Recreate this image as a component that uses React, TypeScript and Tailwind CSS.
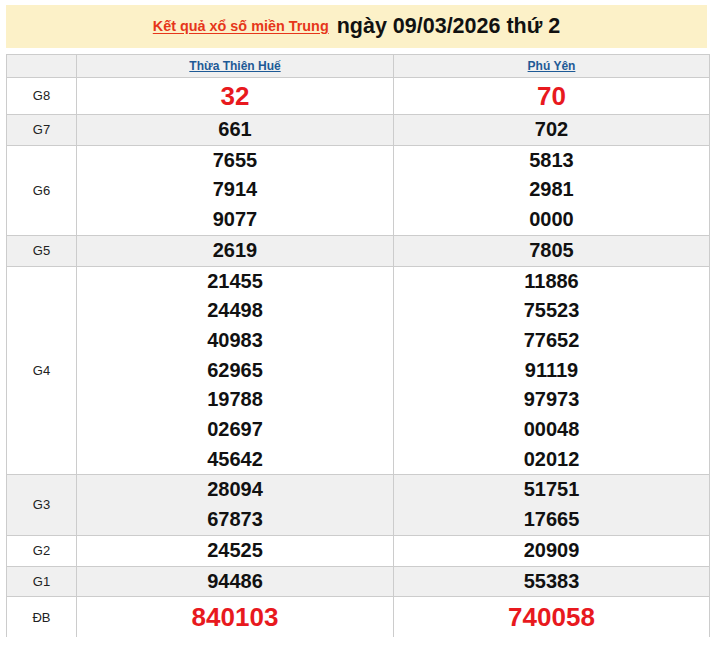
const rows: { label: string; hue: boolean; big?: boolean; h?: string; a: string[]; b: string[] }[] = [
  { label: "G8", hue: false, big: true, h: "h-[37px]", a: ["32"], b: ["70"] },
  { label: "G7", hue: true, a: ["661"], b: ["702"] },
  { label: "G6", hue: false, a: ["7655", "7914", "9077"], b: ["5813", "2981", "0000"] },
  { label: "G5", hue: true, a: ["2619"], b: ["7805"] },
  {
    label: "G4",
    hue: false,
    a: ["21455", "24498", "40983", "62965", "19788", "02697", "45642"],
    b: ["11886", "75523", "77652", "91119", "97973", "00048", "02012"],
  },
  { label: "G3", hue: true, a: ["28094", "67873"], b: ["51751", "17665"] },
  { label: "G2", hue: false, a: ["24525"], b: ["20909"] },
  { label: "G1", hue: true, a: ["94486"], b: ["55383"] },
  { label: "ĐB", hue: false, big: true, h: "h-[40px]", a: ["840103"], b: ["740058"] },
];

function Numbers({ values, big }: { values: string[]; big?: boolean }) {
  return (
    <div className="flex flex-col items-center justify-center">
      {values.map((v, i) =>
        big ? (
          <span key={i} className="text-[26px] font-bold leading-[30px] text-[#e8191e]">
            {v}
          </span>
        ) : (
          <span key={i} className="text-[20px] font-bold leading-[29.7px] text-[#111]">
            {v}
          </span>
        )
      )}
    </div>
  );
}

export default function App() {
  return (
    <div className="h-[645px] w-[712px] bg-white pl-[6px] pt-[5px] font-['Liberation_Sans',Arial,sans-serif]">
      <div className="flex h-[43px] w-[701px] items-center justify-center gap-[8px] bg-[#fcf1c8]">
        <a className="text-[14.4px] font-bold text-[#e6361a] underline underline-offset-2" href="#">
          Kết quả xổ số miền Trung
        </a>
        <span className="text-[21.5px] font-bold text-[#111]">ngày 09/03/2026 thứ 2</span>
      </div>
      <div className="mt-[6px] w-[704px] border-x border-t border-[#cccccc]">
        <div className="grid h-[23px] grid-cols-[70px_317px_1fr] border-b border-[#cccccc] bg-[#f0f0f0]">
          <div className="border-r border-[#cccccc]" />
          <div className="flex items-center justify-center border-r border-[#cccccc]">
            <a className="text-[12px] font-bold text-[#1e5a96] underline" href="#">
              Thừa Thiên Huế
            </a>
          </div>
          <div className="flex items-center justify-center">
            <a className="text-[12px] font-bold text-[#1e5a96] underline" href="#">
              Phú Yên
            </a>
          </div>
        </div>
        {rows.map((r, i) => (
          <div
            key={r.label}
            className={`grid grid-cols-[70px_317px_1fr] ${r.h ?? ""} ${
              i === rows.length - 1 ? "" : "border-b border-[#cccccc]"
            } ${r.hue ? "bg-[#f0f0f0]" : "bg-white"}`}
          >
            <div className="flex items-center justify-center border-r border-[#cccccc] text-[13px] text-[#222]">
              {r.label}
            </div>
            <div className="flex items-center justify-center border-r border-[#cccccc]">
              <Numbers values={r.a} big={r.big} />
            </div>
            <div className="flex items-center justify-center">
              <Numbers values={r.b} big={r.big} />
            </div>
          </div>
        ))}
      </div>
    </div>
  );
}
